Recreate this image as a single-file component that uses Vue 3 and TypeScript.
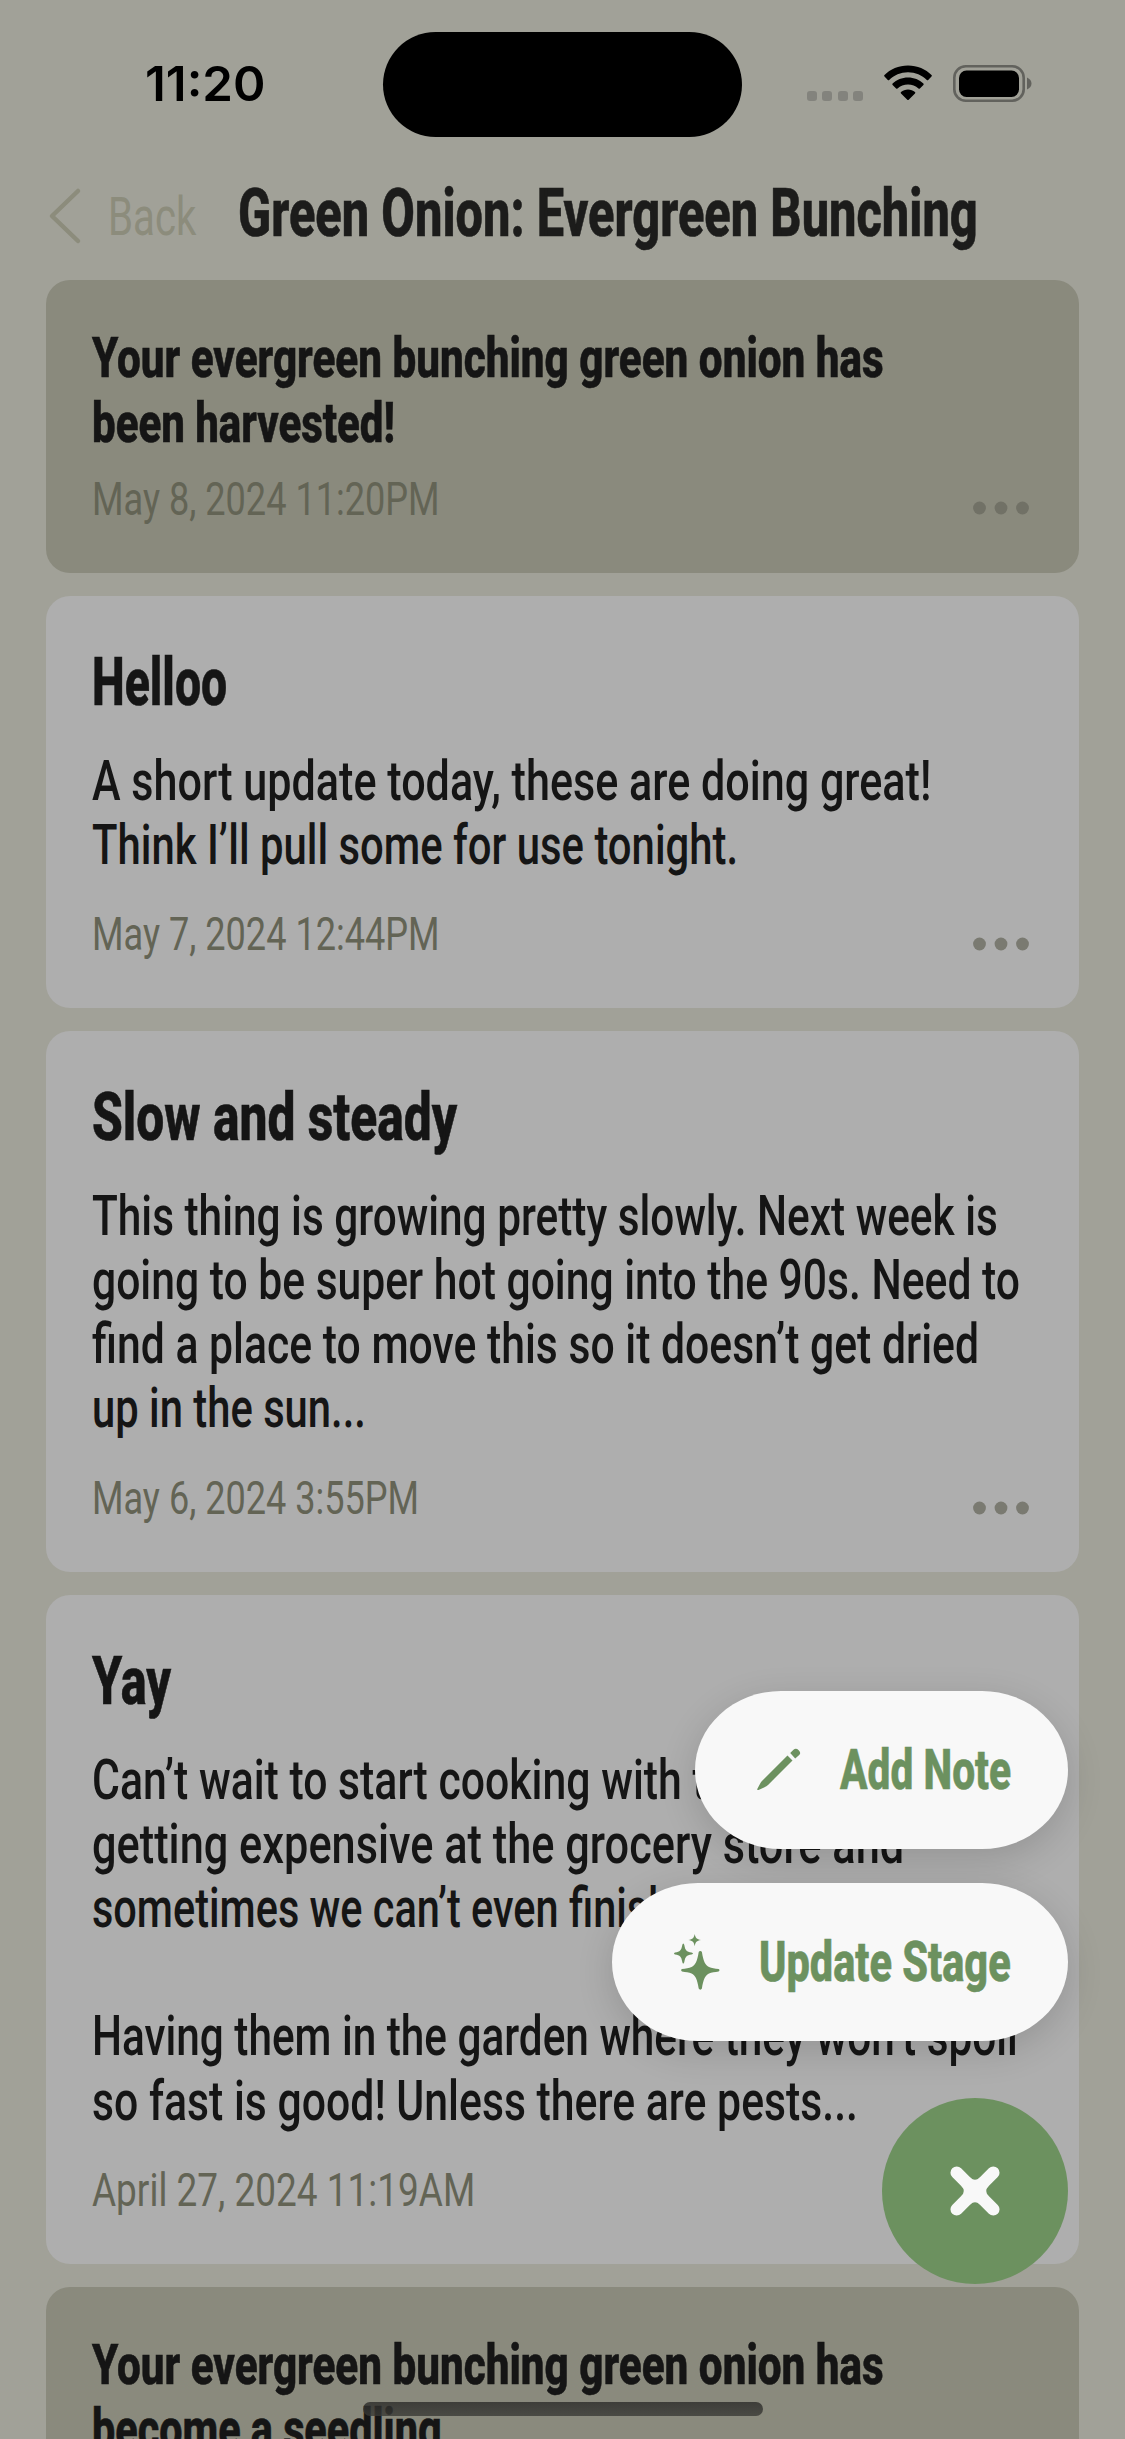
<script setup lang="ts">
import type { Directive } from 'vue'

interface Line {
  text: string
  width: number
}

interface Entry {
  id: number
  stage?: boolean
  title?: Line
  lines: Line[]
  date: Line
}

const entries: Entry[] = [
  {
    id: 1,
    stage: true,
    lines: [
      { text: 'Your evergreen bunching green onion has', width: 792 },
      { text: 'been harvested!', width: 303 },
    ],
    date: { text: 'May 8, 2024 11:20PM', width: 348 },
  },
  {
    id: 2,
    title: { text: 'Helloo', width: 135 },
    lines: [
      { text: 'A short update today, these are doing great!', width: 839 },
      { text: 'Think I’ll pull some for use tonight.', width: 646 },
    ],
    date: { text: 'May 7, 2024 12:44PM', width: 348 },
  },
  {
    id: 3,
    title: { text: 'Slow and steady', width: 365 },
    lines: [
      { text: 'This thing is growing pretty slowly. Next week is', width: 906 },
      { text: 'going to be super hot going into the 90s. Need to', width: 928 },
      { text: 'find a place to move this so it doesn’t get dried', width: 887 },
      { text: 'up in the sun...', width: 274 },
    ],
    date: { text: 'May 6, 2024 3:55PM', width: 327 },
  },
  {
    id: 4,
    title: { text: 'Yay', width: 79 },
    lines: [
      { text: 'Can’t wait to start cooking with these', width: 706 },
      { text: 'getting expensive at the grocery store and', width: 812 },
      { text: 'sometimes we can’t even finish', width: 579 },
      { text: '', width: 0 },
      { text: 'Having them in the garden where they won’t spoil', width: 926 },
      { text: 'so fast is good! Unless there are pests...', width: 766 },
    ],
    date: { text: 'April 27, 2024 11:19AM', width: 383 },
  },
  {
    id: 5,
    stage: true,
    lines: [
      { text: 'Your evergreen bunching green onion has', width: 792 },
      { text: 'become a seedling', width: 350 },
    ],
    date: { text: '', width: 0 },
  },
]

// Condenses a line of type horizontally so it sets to the given measure.
const vFit: Directive<HTMLElement, number> = {
  mounted(el, { value }) {
    const natural = el.offsetWidth
    if (natural > 0 && value > 0) el.style.transform = `scaleX(${value / natural})`
  },
}
</script>

<template>
  <div class="screen">
    <header class="status">
      <div class="time"><span v-fit="120" class="fit">11:20</span></div>
      <div class="island"></div>
      <div class="indicators">
        <div class="signal"><i></i><i></i><i></i><i></i></div>
        <svg class="wifi" width="48" height="36" viewBox="0 0 48 36">
          <path d="M24 0.5C14.6 0.5 6.3 4.200 0.500 10.100Q-.2 10.800.5 11.500L3.800 14.900Q4.500 15.600 5.200 14.900C10 10.200 16.700 7.300 24 7.300S38 10.200 42.800 14.900Q43.500 15.600 44.200 14.900L47.500 11.500Q48.200 10.800 47.500 10.100C41.700 4.200 33.400.5 24 .5Z" />
          <path d="M24 12.500C18 12.500 12.600 14.800 8.600 18.500Q7.900 19.200 8.600 19.900L12.100 23.400Q12.800 24.100 13.500 23.400C16.300 20.900 20 19.400 24 19.400S31.700 20.900 34.500 23.400Q35.200 24.100 35.900 23.400L39.400 19.900Q40.100 19.200 39.400 18.500C35.400 14.800 30 12.500 24 12.500Z" />
          <path d="M24 24.500C21.300 24.500 18.900 25.400 17 27Q16.300 27.700 17 28.400L23.300 34.700Q24 35.400 24.700 34.700L31 28.400Q31.700 27.700 31 27C29.100 25.400 26.700 24.500 24 24.500Z" />
        </svg>
        <svg class="battery" width="80" height="38" viewBox="0 0 80 38">
          <rect x="1.300" y="1.300" width="69.400" height="34.400" rx="11.500" fill="none" stroke="#62625d" stroke-width="2.600" />
          <rect x="6" y="5.500" width="60" height="26.500" rx="7.500" />
          <path d="M74 12.500C80 15 80 22 74 24.500Z" fill="#62625d" />
        </svg>
      </div>
    </header>

    <nav class="nav">
      <svg class="chevron" width="34" height="58" viewBox="0 0 34 58">
        <path d="M30 4L4 29L30 54" fill="none" stroke="#8c8c7c" stroke-width="4.500" stroke-linecap="round" stroke-linejoin="round" />
      </svg>
      <div class="back"><span v-fit="88" class="fit">Back</span></div>
      <h1 class="heading"><span v-fit="740" class="fit">Green Onion: Evergreen Bunching</span></h1>
    </nav>

    <main class="feed">
      <article v-for="entry in entries" :key="entry.id" class="card" :class="{ stage: entry.stage }">
        <h2 v-if="entry.title" class="title">
          <span v-fit="entry.title.width" class="fit">{{ entry.title.text }}</span>
        </h2>
        <div class="body">
          <p v-for="(line, i) in entry.lines" :key="i" class="line">
            <span v-fit="line.width" class="fit">{{ line.text }}</span>
          </p>
        </div>
        <footer class="foot">
          <div class="date"><span v-fit="entry.date.width" class="fit">{{ entry.date.text }}</span></div>
          <svg class="more" width="56" height="14" viewBox="0 0 56 14">
            <circle cx="6.500" cy="7" r="6.400" />
            <circle cx="28" cy="7" r="6.400" />
            <circle cx="49.500" cy="7" r="6.400" />
          </svg>
        </footer>
      </article>
    </main>

    <div class="actions">
      <button class="pill note" type="button">
        <svg class="pencil" width="44" height="44" viewBox="0 0 44 44">
          <path d="M30.500 7.500L35.500 12.500L11 37Q9.500 38.500 7.500 39.300L1.500 41.900Q-.2 42.400.4 40.700L3.200 35.500Q4 34 5.200 32.800Z" />
          <path d="M33.200 5L36.500 1.700Q39 -.3 41.700 2.300T42.200 7L38.200 10.500Z" />
        </svg>
        <span class="label"><span v-fit="171" class="fit">Add Note</span></span>
      </button>
      <button class="pill update" type="button">
        <svg class="sparkles" width="46" height="56" viewBox="0 0 46 56">
          <path d="M24.700 18C25.300 16.600 27.300 16.600 27.900 18C29.300 27.500 31.500 31.200 35 33C37.500 34.200 41 34.500 44.600 35.100Q46.400 36.300 44.600 37.500C41 38.100 37.500 38.400 35 39.600C31.500 41.400 29.300 45.100 27.900 54.600C27.300 56 25.300 56 24.700 54.600C23.300 45.100 21.100 41.400 17.600 39.600C15.100 38.400 11.600 38.100 8 37.500Q6.200 36.300 8 35.100C11.600 34.500 15.100 34.200 17.600 33C21.100 31.200 23.300 27.500 24.700 18Z" />
          <path d="M9.300 9.500Q10 9.500 10.300 11C11.300 16.500 12.500 17.700 17.500 18.500Q19 18.800 19 19.500Q19 20.200 17.500 20.500C12.500 21.300 11.300 22.500 10.300 28Q10 29.500 9.300 29.500Q8.600 29.500 8.300 28C7.300 22.500 6.100 21.300 1 20.500Q0 20.200 0 19.500Q0 18.800 1 18.500C6.100 17.700 7.300 16.500 8.300 11Q8.600 9.500 9.300 9.500Z" />
          <path d="M20.700 0C21.600 4.300 22.500 5.100 27 6C22.500 6.900 21.600 7.800 20.700 12.200C19.800 7.800 18.900 6.900 14.400 6C18.900 5.100 19.800 4.300 20.700 0Z" />
        </svg>
        <span class="label"><span v-fit="252" class="fit">Update Stage</span></span>
      </button>
      <button class="fab" type="button" aria-label="Close">
        <svg width="50" height="50" viewBox="0 0 50 50">
          <path d="M6.700 6.700L43.300 43.300M43.300 6.700L6.700 43.300" fill="none" stroke="#f8f8f8" stroke-width="12.500" stroke-linecap="round" />
          <path d="M20 11.500Q25 16 30 11.500L38.500 20Q34 25 38.500 30L30 38.500Q25 34 20 38.500L11.500 30Q16 25 11.500 20Z" fill="#f8f8f8" />
        </svg>
      </button>
    </div>
    <div class="home"></div>
  </div>
</template>

<style>
body {
  margin: 0;
  background: #a1a198;
}
</style>

<style scoped>
.screen {
  position: relative;
  width: 1125px;
  height: 2439px;
  overflow: hidden;
  background: #a1a198;
  color: #151515;
  font-family: Roboto, 'Liberation Sans', sans-serif;
}

.fit {
  display: inline-block;
  white-space: nowrap;
  transform-origin: 0 50%;
}

.status {
  display: flex;
  height: 137px;
  box-sizing: border-box;
  padding: 32px 0 0 145px;
}

.time {
  width: 238px;
  height: 105px;
  color: #000;
  font-family: Inter, sans-serif;
  font-size: 48px;
  font-weight: 600;
  line-height: 104px;
}

.island {
  width: 359px;
  height: 105px;
  border-radius: 53px;
  background: #000;
}

.indicators {
  display: flex;
  align-items: flex-start;
  margin-left: 65px;
  padding-top: 33px;
}

.signal {
  display: flex;
  gap: 5.300px;
  width: 77px;
  padding-top: 26px;
}

.signal i {
  width: 10px;
  height: 9.700px;
  border-radius: 3px;
  background: #83837d;
}

.battery {
  margin-left: 21px;
}

.nav {
  display: flex;
  align-items: flex-start;
  height: 143px;
  box-sizing: border-box;
  padding: 50px 0 0 48px;
}

.chevron {
  flex: none;
}

.back {
  flex: none;
  width: 116px;
  margin: 0 14px 0 26px;
  color: #8c8c7c;
  font-size: 53px;
  line-height: 60px;
}

.heading {
  flex: none;
  margin: 0;
  color: #1c1c1b;
  font-size: 66px;
  font-weight: 800;
  line-height: 53px;
  -webkit-text-stroke: 0.6px currentColor;
}

.feed {
  display: flex;
  flex-direction: column;
  gap: 23px;
  padding: 0 46px;
}

.card {
  box-sizing: border-box;
  padding: 46px;
  border-radius: 24px;
  background: #aeaeae;
}

.card.stage {
  padding-bottom: 45.500px;
  background: #8a8a7d;
}

.title {
  height: 78px;
  margin: 0 0 29px;
  font-size: 67px;
  font-weight: 800;
  line-height: 80px;
  -webkit-text-stroke: 0.6px currentColor;
}

.line {
  height: 64.200px;
  margin: 0;
  font-size: 55px;
  font-weight: 500;
  line-height: 64.200px;
}

.stage .line {
  height: 64.500px;
  font-weight: 800;
  -webkit-text-stroke: 0.6px currentColor;
}

.foot {
  display: flex;
  justify-content: space-between;
  margin-top: 29px;
}

.stage .foot {
  margin-top: 16px;
}

.date {
  width: 400px;
  height: 56px;
  color: #636455;
  font-size: 47px;
  line-height: 56px;
}

.more {
  margin: 31px 4px 0 0;
  fill: #7a7a71;
}

.stage .more {
  margin-top: 30px;
  fill: #717166;
}

.actions {
  position: absolute;
  top: 1691px;
  right: 57px;
  display: flex;
  flex-direction: column;
  align-items: flex-end;
}

.pill {
  display: flex;
  align-items: center;
  height: 158px;
  margin: 0 0 34px;
  border: 0;
  border-radius: 86px / 79px;
  background: #f8f8f8;
  box-shadow: 0 10px 36px rgba(0, 0, 0, 0.15);
  color: #6c915f;
  fill: #6c915f;
  font-family: inherit;
  text-align: left;
}

.note {
  width: 373px;
  padding: 0 0 0 62px;
}

.update {
  width: 456px;
  padding: 0 0 0 62px;
}

.label {
  width: 200px;
  margin-left: 39px;
  font-size: 55px;
  font-weight: 800;
  line-height: 60px;
  -webkit-text-stroke: 0.6px currentColor;
}

.fab {
  display: flex;
  align-items: center;
  justify-content: center;
  width: 186px;
  height: 186px;
  margin-top: 23px;
  padding: 0;
  border: 0;
  border-radius: 50%;
  background: #6c915f;
}

.home {
  position: absolute;
  left: 363px;
  top: 2402px;
  width: 400px;
  height: 14px;
  border-radius: 7px;
  background: linear-gradient(rgba(42, 42, 40, 0.8), rgba(58, 58, 54, 0.8));
}
</style>
